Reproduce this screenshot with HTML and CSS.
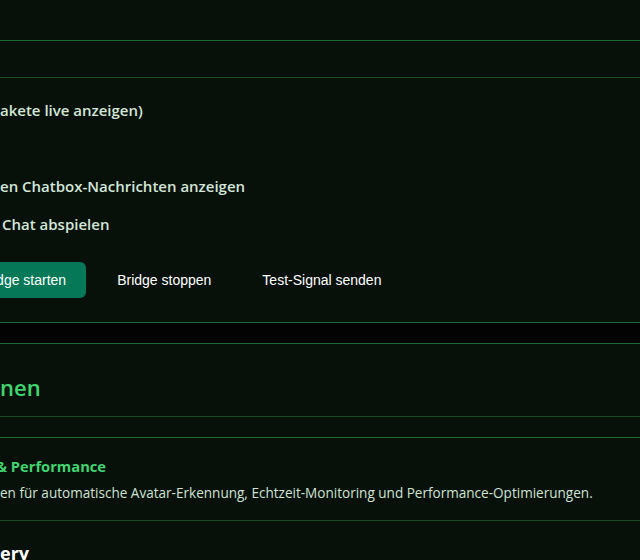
FILE: index.html
```html
<!DOCTYPE html>
<html lang="de">
<head>
    <meta charset="UTF-8">
    <meta name="viewport" content="width=device-width, initial-scale=1.0">
    <title>OSC Bridge</title>
    <link rel="stylesheet" href="styles.css">
</head>
<body>
    <main class="page">
        <!-- bridge settings -->
        <section class="panel panel-bridge">
            <div class="panel-head"></div>
            <div class="panel-sub"></div>

            <div class="options">
                <label class="option">akete live anzeigen)</label>
                <label class="option"></label>
                <label class="option">en Chatbox-Nachrichten anzeigen</label>
                <label class="option option-chat">Chat abspielen</label>
            </div>

            <div class="actions">
                <button class="btn btn-primary">Bridge starten</button>
                <button class="btn">Bridge stoppen</button>
                <button class="btn">Test-Signal senden</button>
            </div>
        </section>

        <!-- extra features -->
        <section class="panel panel-extras">
            <h2 class="panel-title">nen</h2>

            <div class="feature">
                <h3 class="feature-title">&amp; Performance</h3>
                <p class="feature-text">en für automatische Avatar-Erkennung, Echtzeit-Monitoring und Performance-Optimierungen.</p>
            </div>

            <h3 class="feature-next">ery</h3>
        </section>
    </main>
</body>
</html>
```

FILE: styles.css
```css
body {
    margin: 0;
    height: 560px;
    overflow: hidden;
    background: #020302;
    font-family: "Open Sans", "Noto Sans", sans-serif;
    color: #d3e6d7;
}
.page {
    width: 640px;
}
.panel {
    background: #07110a;
    border-top: 1px solid #1b6a30;
    border-bottom: 1px solid #1b6a30;
}
.panel-bridge {
    border-top: none;
    padding-bottom: 24px;
}
.panel-head {
    height: 40px;
    border-bottom: 1px solid #1b6a30;
}
.panel-sub {
    height: 36px;
    border-bottom: 1px solid #174d26;
}
.options {
    display: flex;
    flex-direction: column;
    gap: 18px;
    padding-top: 22px;
}
.option {
    height: 20px;
    line-height: 20px;
    font-size: 15px;
    font-weight: 600;
    white-space: nowrap;
}
.option-chat {
    padding-left: 2px;
}
.actions {
    display: flex;
    gap: 11px;
    margin-top: 28px;
    margin-left: -41px;
}
.btn {
    height: 36px;
    padding: 0 20px;
    border: none;
    border-radius: 6px;
    background: transparent;
    color: #ffffff;
    font-family: "Liberation Sans", Arial, sans-serif;
    font-size: 14px;
    white-space: nowrap;
}
.btn-primary {
    background: #047857;
}
.panel-extras {
    margin-top: 20px;
}
.panel-title {
    margin: 0;
    height: 30px;
    padding: 28px 0 14px 0;
    line-height: 30px;
    font-size: 22px;
    font-weight: 600;
    color: #41d46f;
    border-bottom: 1px solid #174d26;
}
.feature {
    margin-top: 20px;
    padding: 18px 0 17px;
    border-top: 1px solid #1b6a30;
    border-bottom: 1px solid #174d26;
}
.feature-title {
    margin: 0 0 0 -4px;
    line-height: 20px;
    font-size: 14.7px;
    font-weight: 700;
    color: #41d46f;
}
.feature-text {
    margin: 7px 0 0;
    line-height: 20px;
    font-size: 13.55px;
    white-space: nowrap;
    color: #cfe2d3;
}
.feature-next {
    margin: 20px 0 0;
    line-height: 24px;
    font-size: 18px;
    font-weight: 700;
    color: #ffffff;
}
```
